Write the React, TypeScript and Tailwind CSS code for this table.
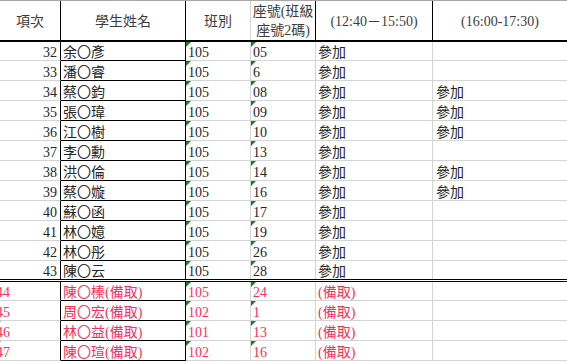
import React from 'react';

type Row = {
  no: string;
  name: string;
  cls: string;
  seat: string;
  first: string;
  second: string;
  reserve?: boolean;
  mark?: boolean;
};

const rows: Row[] = [
  { no: '32', name: '余〇彥', cls: '105', seat: '05', first: '參加', second: '' },
  { no: '33', name: '潘〇睿', cls: '105', seat: '6', first: '參加', second: '' },
  { no: '34', name: '蔡〇鈞', cls: '105', seat: '08', first: '參加', second: '參加' },
  { no: '35', name: '張〇瑋', cls: '105', seat: '09', first: '參加', second: '參加' },
  { no: '36', name: '江〇樹', cls: '105', seat: '10', first: '參加', second: '參加' },
  { no: '37', name: '李〇勳', cls: '105', seat: '13', first: '參加', second: '' },
  { no: '38', name: '洪〇倫', cls: '105', seat: '14', first: '參加', second: '參加' },
  { no: '39', name: '蔡〇嫙', cls: '105', seat: '16', first: '參加', second: '參加' },
  { no: '40', name: '蘇〇函', cls: '105', seat: '17', first: '參加', second: '' },
  { no: '41', name: '林〇嬑', cls: '105', seat: '19', first: '參加', second: '' },
  { no: '42', name: '林〇彤', cls: '105', seat: '26', first: '參加', second: '' },
  { no: '43', name: '陳〇云', cls: '105', seat: '28', first: '參加', second: '' },
  { no: '44', name: '陳〇榛(備取)', cls: '105', seat: '24', first: '(備取)', second: '', reserve: true },
  { no: '45', name: '周〇宏(備取)', cls: '102', seat: '1', first: '(備取)', second: '', reserve: true },
  { no: '46', name: '林〇益(備取)', cls: '101', seat: '13', first: '(備取)', second: '', reserve: true, mark: true },
  { no: '47', name: '陳〇瑄(備取)', cls: '102', seat: '16', first: '(備取)', second: '', reserve: true, mark: true },
];

function Flag({ shift }: { shift?: boolean }) {
  return (
    <span
      className={`absolute top-0 border-t-[5px] border-r-[5px] border-t-[#14801e] border-r-transparent ${
        shift ? '-left-[4px]' : 'left-0'
      }`}
    />
  );
}

function BodyRow({ row, index }: { row: Row; index: number }) {
  const double = index === 11;
  const short = index === 0 || index === 12;
  const height = double ? 'h-[21px] border-b-[3px] border-double border-b-black' : short ? 'h-[19px]' : 'h-[20px]';
  const grey = double ? '' : 'border-b border-b-[#d4d4d4]';
  const black = double ? '' : 'border-b border-b-black';
  const text = row.reserve ? 'text-[#f5325a]' : 'text-[#262626]';

  return (
    <div className={`flex ${height} ${text}`}>
      <div className={`relative w-[61px] shrink-0 overflow-hidden border-r border-r-black flex items-end ${grey} ${row.reserve ? 'justify-start' : 'justify-end pr-[3px]'}`}>
        {row.mark && <Flag shift />}
        <span className={`leading-[15px] ${row.reserve ? '-ml-[4px]' : ''}`}>{row.no}</span>
      </div>
      <div className={`w-[125px] shrink-0 overflow-hidden border-r border-r-black pl-[2px] flex items-end whitespace-nowrap ${black}`}>
        <span className="leading-[15px]">{row.name}</span>
      </div>
      <div className={`relative w-[65px] shrink-0 border-r border-r-[#d4d4d4] pl-[2px] flex items-end ${grey}`}>
        <Flag />
        <span className="leading-[15px]">{row.cls}</span>
      </div>
      <div className={`relative w-[65px] shrink-0 border-r border-r-[#d4d4d4] pl-[2px] flex items-end ${grey}`}>
        <Flag />
        <span className="leading-[15px]">{row.seat}</span>
      </div>
      <div className={`w-[117px] shrink-0 border-r border-r-[#d4d4d4] pl-[2px] flex items-end ${grey}`}>
        <span className="leading-[15px]">{row.first}</span>
      </div>
      <div className={`flex-1 pl-[3px] flex items-end ${grey}`}>
        <span className="leading-[15px]">{row.second}</span>
      </div>
    </div>
  );
}

export default function App() {
  return (
    <main className="w-[567px] h-[362px] overflow-hidden bg-white text-[14px] font-['Liberation_Serif','Noto_Sans_CJK_TC',serif]">
      <div className="flex h-[42px] border-t border-t-[#a6a6a6] border-b-2 border-b-black text-[#3c3c3c]">
        <div className="w-[61px] shrink-0 border-r border-r-black flex items-center justify-center pt-[2px]">項次</div>
        <div className="w-[125px] shrink-0 border-r border-r-black flex items-center justify-center pt-[2px]">學生姓名</div>
        <div className="w-[65px] shrink-0 border-r border-r-[#d4d4d4] flex items-center justify-center pt-[2px]">班別</div>
        <div className="w-[65px] shrink-0 border-r border-r-black flex items-center justify-center text-center whitespace-nowrap leading-[19px]">
          <span>
            座號(班級
            <br />
            座號2碼)
          </span>
        </div>
        <div className="w-[117px] shrink-0 border-r border-r-black flex items-center justify-center pt-[2px] whitespace-nowrap">(12:40－15:50)</div>
        <div className="flex-1 flex items-center justify-center pt-[2px] whitespace-nowrap">(16:00-17:30)</div>
      </div>
      {rows.map((row, index) => (
        <BodyRow key={row.no} row={row} index={index} />
      ))}
    </main>
  );
}
